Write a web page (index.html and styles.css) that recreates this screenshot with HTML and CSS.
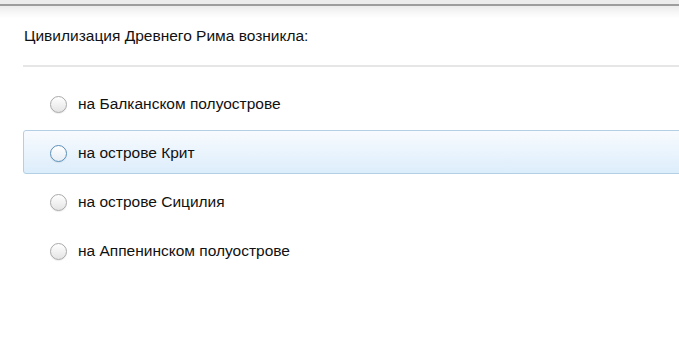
FILE: index.html
```html
<!DOCTYPE html>
<html lang="ru">
<head>
  <meta charset="UTF-8" />
  <title>Тест</title>
  <link rel="stylesheet" href="styles.css">
</head>
<body>
  <div class="topbar"></div>
  <div class="quiz">
    <div class="question">Цивилизация Древнего Рима возникла:</div>
    <ul class="answers">
      <li class="answer"><span class="radio"></span>на Балканском полуострове</li>
      <li class="answer hover"><span class="radio"></span>на острове Крит</li>
      <li class="answer"><span class="radio"></span>на острове Сицилия</li>
      <li class="answer"><span class="radio"></span>на Аппенинском полуострове</li>
    </ul>
  </div>
</body>
</html>
```

FILE: styles.css
```css
body {
  margin: 0;
  background: #fff;
  font-family: 'Liberation Sans', Arial, sans-serif;
  color: #111;
  overflow: hidden;
}
.topbar {
  height: 4px;
  background: #ececec;
  border-bottom: 2px solid #9d9d9d;
}
.quiz {
  padding-left: 23px;
  background: linear-gradient(#ececec, #fff 12px);
}
.question {
  height: 59px;
  line-height: 60px;
  padding-left: 1px;
  font-size: 15.5px;
  border-bottom: 2px solid #e6e6e6;
  margin-right: -10px;
}
.answers {
  list-style: none;
  margin: 14px -10px 0 0;
  padding: 0;
}
.answer {
  display: flex;
  align-items: center;
  box-sizing: border-box;
  height: 44px;
  margin-bottom: 5px;
  padding-left: 26px;
  padding-top: 2px;
  font-size: 15.5px;
  border: 1px solid transparent;
  border-radius: 3px;
}
.answer.hover {
  background: linear-gradient(#f8fbfe, #dcedfb);
  border-color: #b3cfe3;
}
.radio {
  width: 15px;
  height: 15px;
  border: 1px solid #a9a9a9;
  border-radius: 50%;
  background: linear-gradient(#fff, #e4e4e4);
  margin-right: 11px;
  box-shadow: 0 1px 1px rgba(0,0,0,0.08);
}
.answer.hover .radio {
  border-color: #5b8fb9;
  background: linear-gradient(#fff, #e6eef5);
}
```
